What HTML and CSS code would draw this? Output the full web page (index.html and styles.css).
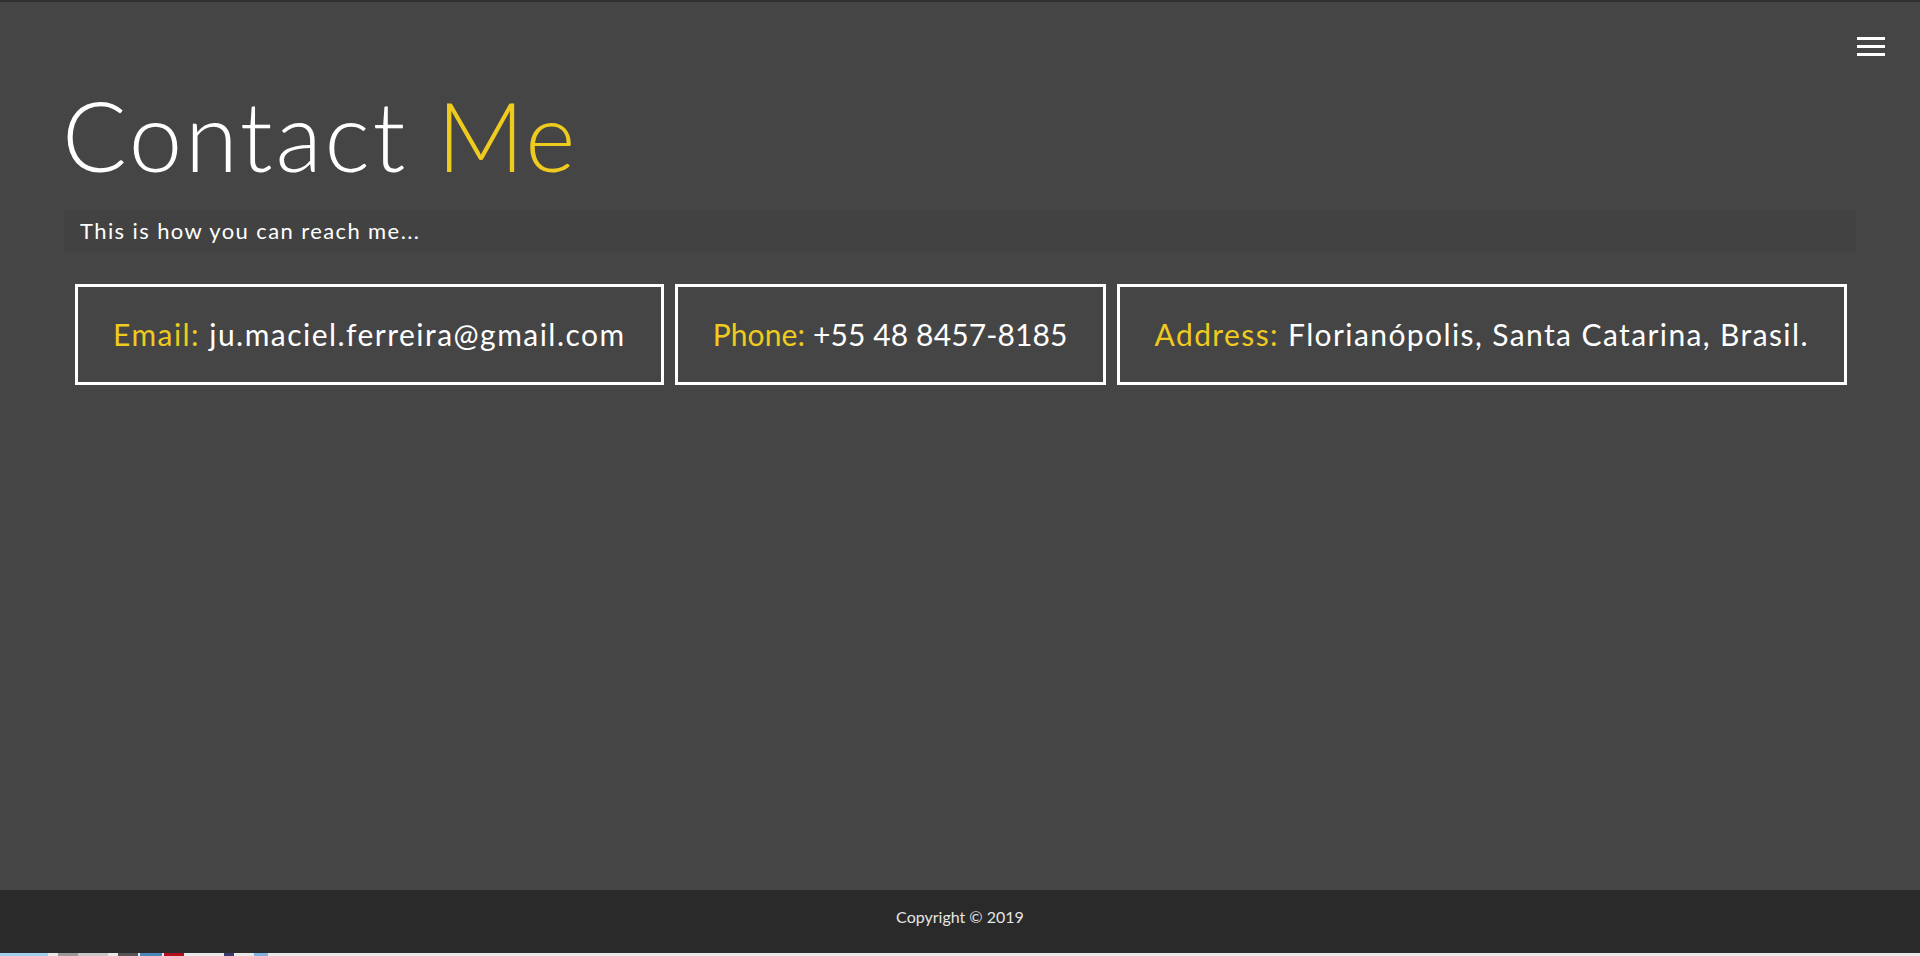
FILE: index.html
```html
<!DOCTYPE html>
<html lang="en">
<head>
<meta charset="utf-8">
<title>Contact Me</title>
<link rel="stylesheet" href="styles.css">
</head>
<body>
<div class="topline"></div>
<header class="nav">
  <button class="burger" aria-label="Menu"><span></span><span></span><span></span></button>
</header>
<main class="page">
  <h1 class="title">Contact <span class="hl">Me</span></h1>
  <p class="lead">This is how you can reach me...</p>
  <div class="cards">
    <div class="card card-email"><span class="hl">Email:</span> ju.maciel.ferreira@gmail.com</div>
    <div class="card card-phone"><span class="hl">Phone:</span> +55 48 8457-8185</div>
    <div class="card card-address"><span class="hl">Address:</span> Florianópolis, Santa Catarina, Brasil.</div>
  </div>
</main>
<footer class="footer">Copyright © 2019</footer>
<div class="taskbar">
  <i class="tb tb-blue"></i><i class="tb tb-gap"></i><i class="tb tb-grey"></i><i class="tb tb-grey2"></i><i class="tb tb-dark"></i><i class="tb tb-steel"></i><i class="tb tb-red"></i><i class="tb tb-gap2"></i><i class="tb tb-navy"></i><i class="tb tb-sky"></i>
</div>
</body>
</html>
```
FILE: styles.css
```css
* { box-sizing: border-box; }
html, body { margin: 0; padding: 0; }
body {
  background: #454545;
  color: #ffffff;
  font-family: "Lato", "Open Sans", sans-serif;
  min-height: 100vh;
  display: flex;
  flex-direction: column;
}
.topline { height: 2px; background: #2f2f2f; }
.nav {
  display: flex;
  justify-content: flex-end;
  padding: 35px 35px 0 0;
}
.burger {
  display: flex;
  flex-direction: column;
  gap: 5px;
  width: 28px;
  padding: 0;
  border: 0;
  background: transparent;
  cursor: pointer;
}
.burger span { display: block; height: 3px; width: 28px; background: #ffffff; }
.page {
  flex: 1;
  padding: 0 64px;
}
.hl { color: #eecb1e; }
.title {
  margin: 19px 0 0 0;
  font-size: 96px;
  font-weight: 300;
  line-height: 120px;
  letter-spacing: 2.7px;
  text-indent: -2px;
}
.lead {
  margin: 15px 0 0 0;
  height: 42px;
  line-height: 41px;
  padding: 0 16px;
  background: #424242;
  font-size: 22px;
  font-weight: 400;
  letter-spacing: 1.4px;
}
.cards {
  display: flex;
  gap: 11px;
  padding: 0 11px;
  margin-top: 32px;
}
.card {
  border: 3px solid #ffffff;
  padding: 0 35px;
  height: 101px;
  line-height: 95px;
  font-size: 30px;
  white-space: nowrap;
}
.card-email { letter-spacing: 1.47px; }
.card-phone { letter-spacing: 0.12px; }
.card-address { letter-spacing: 1.4px; }
.footer {
  height: 63px;
  background: #2a2a2a;
  color: #e6e6e6;
  font-size: 16px;
  line-height: 19px;
  padding-top: 17px;
  text-align: center;
}
.taskbar { height: 3px; display: flex; background: #e9e9e9; }
.tb { display: block; height: 3px; }
.tb-blue { width: 48px; background: #9fd0ef; }
.tb-gap { width: 10px; }
.tb-grey { width: 20px; background: #9a9a9a; }
.tb-grey2 { width: 30px; background: #c8c8c8; }
.tb-dark { width: 20px; background: #555; margin-left: 10px; }
.tb-steel { width: 22px; background: #4a86b8; margin-left: 2px; }
.tb-red { width: 20px; background: #b01020; margin-left: 2px; }
.tb-gap2 { width: 40px; }
.tb-navy { width: 10px; background: #3a3a6a; }
.tb-sky { width: 14px; background: #7fb2e0; margin-left: 20px; }
```
